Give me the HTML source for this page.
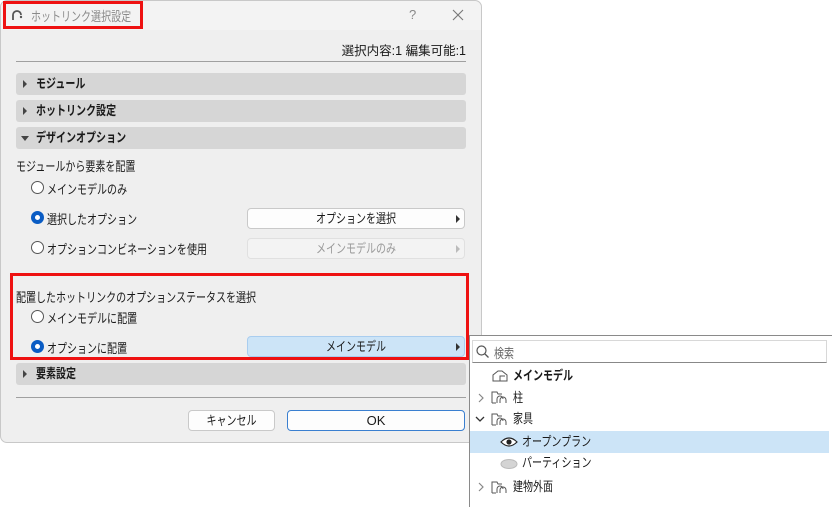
<!DOCTYPE html>
<html><head><meta charset="utf-8"><style>
*{box-sizing:border-box;margin:0;padding:0}
body{width:832px;height:506px;background:#fff;position:relative;overflow:hidden;font-family:"Liberation Sans","Noto Sans CJK JP",sans-serif;font-size:13px;color:#1a1a1a}
.a{position:absolute}
.s{display:inline-block;transform:scaleX(.77);transform-origin:left center;white-space:nowrap}
.c{display:inline-block;transform:scaleX(.77);transform-origin:center center;white-space:nowrap}
.dlg{left:0;top:0;width:482px;height:443px;background:#efefef;border:1px solid #c8c8c8;border-radius:7px}
.bar{left:16px;width:450px;height:22px;background:#d6d6d6;border-radius:3px;font-weight:bold;line-height:22px;padding-left:20px}
.bar i{position:absolute;left:7px;top:7px;width:0;height:0;border-left:4px solid #444;border-top:4px solid transparent;border-bottom:4px solid transparent}
.bar i.d{left:5px;top:9px;border-top:5px solid #444;border-left:4px solid transparent;border-right:4px solid transparent;border-bottom:0}
.rad{width:13px;height:13px;border:1px solid #555;border-radius:50%;background:#fff}
.rad.on{border:4px solid #0a5cc4;background:#fff}
.btn{left:247px;width:218px;height:21px;background:#fdfdfd;border:1px solid #c9c9c9;border-radius:4px;text-align:center;line-height:19px}
.btn b{position:absolute;right:4px;top:6px;border-left:4px solid #333;border-top:4px solid transparent;border-bottom:4px solid transparent}
.red{border:3px solid #ee1111}
.line{height:1px;background:#a0a0a0;left:16px;width:450px}
.row{left:470px;width:359px;height:22px;line-height:22px}
</style></head><body>
<div class="a dlg"></div>
<div class="a" style="left:1px;top:1px;width:480px;height:29px;background:#f3f3f3;border-radius:7px 7px 0 0"></div>
<svg class="a" style="left:11px;top:9px" width="12" height="12"><path d="M2 11V6a4 4 0 0 1 8 0" fill="none" stroke="#555" stroke-width="1.8"/><circle cx="10" cy="8" r="1.2" fill="#555"/></svg>
<div class="a" style="left:31px;top:6px;color:#8a8a8a;font-size:13px"><span class="s">ホットリンク選択設定</span></div>
<div class="a red" style="left:3px;top:1px;width:140px;height:28px"></div>
<div class="a" style="left:409px;top:7px;color:#888;font-size:13px">?</div>
<svg class="a" style="left:452px;top:9px" width="12" height="12"><path d="M1 1L11 11M11 1L1 11" stroke="#777" stroke-width="1.1"/></svg>
<div class="a" style="right:366px;top:40px;font-size:12.5px;white-space:nowrap">選択内容:1 編集可能:1</div>
<div class="a line" style="top:61px"></div>
<div class="a bar" style="top:73px"><i></i><span class="s">モジュール</span></div>
<div class="a bar" style="top:100px"><i></i><span class="s">ホットリンク設定</span></div>
<div class="a bar" style="top:127px"><i class="d"></i><span class="s">デザインオプション</span></div>
<div class="a" style="left:16px;top:156px"><span class="s">モジュールから要素を配置</span></div>
<div class="a rad" style="left:31px;top:181px"></div><div class="a" style="left:47px;top:179px"><span class="s">メインモデルのみ</span></div>
<div class="a rad on" style="left:31px;top:211px"></div><div class="a" style="left:47px;top:209px"><span class="s">選択したオプション</span></div>
<div class="a btn" style="top:208px"><span class="c">オプションを選択</span><b></b></div>
<div class="a rad" style="left:31px;top:241px"></div><div class="a" style="left:47px;top:239px"><span class="s">オプションコンビネーションを使用</span></div>
<div class="a btn" style="top:238px;background:#f3f3f3;border-color:#e0e0e0;color:#9a9a9a"><span class="c">メインモデルのみ</span><b style="border-left-color:#bbb"></b></div>
<div class="a" style="left:16px;top:287px"><span class="s">配置したホットリンクのオプションステータスを選択</span></div>
<div class="a rad" style="left:31px;top:310px"></div><div class="a" style="left:47px;top:308px"><span class="s">メインモデルに配置</span></div>
<div class="a rad on" style="left:31px;top:340px"></div><div class="a" style="left:47px;top:338px"><span class="s">オプションに配置</span></div>
<div class="a btn" style="top:336px;background:#cce4f7;border-color:#a9cdef"><span class="c">メインモデル</span><b></b></div>
<div class="a red" style="left:10px;top:273px;width:459px;height:87px"></div>
<div class="a bar" style="top:363px"><i></i><span class="s">要素設定</span></div>
<div class="a line" style="top:397px"></div>
<div class="a btn" style="left:188px;width:87px;top:410px"><span class="c">キャンセル</span></div>
<div class="a btn" style="left:287px;width:178px;top:410px;border-color:#3a7fd0">OK</div>
<div class="a" style="left:469px;top:335px;width:364px;height:172px;background:#fff;border:1px solid #8a8a8a;border-right:0;border-bottom:0"></div>
<div class="a" style="left:472px;top:340px;width:355px;height:23px;border:1px solid #d8d8d8;border-bottom:1px solid #888;background:#fff"></div>
<svg class="a" style="left:476px;top:345px" width="13" height="13"><circle cx="5.5" cy="5.5" r="4.5" fill="none" stroke="#555" stroke-width="1.2"/><path d="M9 9l3.5 3.5" stroke="#555" stroke-width="1.3"/></svg>
<div class="a" style="left:494px;top:343px;color:#666"><span class="s">検索</span></div>
<div class="a row" style="top:365px;padding-left:43px;font-weight:bold"><span class="s">メインモデル</span></div>
<svg class="a" style="left:492px;top:370px" width="16" height="12"><path d="M1 11V5l5-4h4l5 4v6zM8 11V6h5" fill="none" stroke="#555"/></svg>
<div class="a row" style="top:387px;padding-left:43px"><span class="s">柱</span></div>
<div class="a row" style="top:408px;padding-left:43px"><span class="s">家具</span></div>
<div class="a row" style="top:431px;background:#cce4f7;padding-left:52px"><span class="s">オープンプラン</span></div>
<div class="a row" style="top:452px;padding-left:52px"><span class="s">パーティション</span></div>
<div class="a row" style="top:476px;padding-left:43px"><span class="s">建物外面</span></div>
<svg class="a" style="left:477px;top:393px" width="8" height="10"><path d="M2 1l4 4-4 4" fill="none" stroke="#888" stroke-width="1.2"/></svg>
<svg class="a" style="left:475px;top:415px" width="10" height="8"><path d="M1 2l4 4 4-4" fill="none" stroke="#333" stroke-width="1.3"/></svg>
<svg class="a" style="left:477px;top:482px" width="8" height="10"><path d="M2 1l4 4-4 4" fill="none" stroke="#888" stroke-width="1.2"/></svg>
<svg class="a" style="left:491px;top:390px" width="18" height="14"><path d="M1 13V2h5l1 2h4M1 13h4" fill="none" stroke="#555"/><path d="M6 13V9a3 3 0 0 1 6 0M9 13V10a3 3 0 0 1 6 0v3" fill="none" stroke="#555"/></svg>
<svg class="a" style="left:491px;top:412px" width="18" height="14"><path d="M1 13V2h5l1 2h4M1 13h4" fill="none" stroke="#555"/><path d="M6 13V9a3 3 0 0 1 6 0M9 13V10a3 3 0 0 1 6 0v3" fill="none" stroke="#555"/></svg>
<svg class="a" style="left:491px;top:480px" width="18" height="14"><path d="M1 13V2h5l1 2h4M1 13h4" fill="none" stroke="#555"/><path d="M6 13V9a3 3 0 0 1 6 0M9 13V10a3 3 0 0 1 6 0v3" fill="none" stroke="#555"/></svg>
<svg class="a" style="left:500px;top:436px" width="18" height="12"><path d="M1 6Q9 -2 17 6Q9 14 1 6z" fill="#fff" stroke="#222" stroke-width="1.2"/><circle cx="9" cy="6" r="2.6" fill="#222"/></svg>
<svg class="a" style="left:500px;top:458px" width="18" height="12"><ellipse cx="9" cy="6" rx="8" ry="4.5" fill="#d4d4d4" stroke="#bbb"/></svg>
</body></html>
